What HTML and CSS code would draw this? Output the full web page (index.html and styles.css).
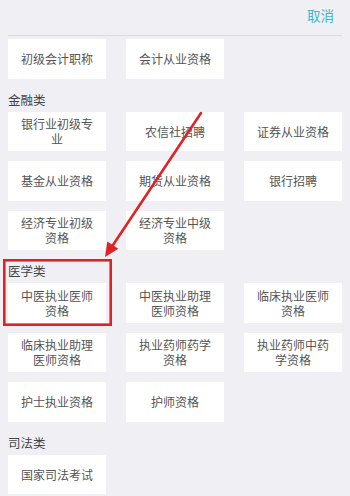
FILE: index.html
```html
<!DOCTYPE html>
<html lang="zh">
<head>
<meta charset="utf-8">
<link rel="stylesheet" href="styles.css">
</head>
<body>
<div class="page">
  <div class="header"><span class="cancel">取消</span></div>
  <div class="grid first">
    <div class="tile">初级会计职称</div>
    <div class="tile">会计从业资格</div>
  </div>
  <div class="label">金融类</div>
  <div class="grid">
    <div class="tile">银行业初级专业</div>
    <div class="tile">农信社招聘</div>
    <div class="tile">证券从业资格</div>
    <div class="tile">基金从业资格</div>
    <div class="tile">期货从业资格</div>
    <div class="tile">银行招聘</div>
    <div class="tile">经济专业初级资格</div>
    <div class="tile">经济专业中级资格</div>
  </div>
  <div class="label">医学类</div>
  <div class="grid">
    <div class="tile">中医执业医师资格</div>
    <div class="tile">中医执业助理医师资格</div>
    <div class="tile">临床执业医师资格</div>
    <div class="tile">临床执业助理医师资格</div>
    <div class="tile">执业药师药学资格</div>
    <div class="tile">执业药师中药学资格</div>
    <div class="tile">护士执业资格</div>
    <div class="tile">护师资格</div>
  </div>
  <div class="label">司法类</div>
  <div class="grid">
    <div class="tile">国家司法考试</div>
  </div>
  <svg class="overlay" width="350" height="496" viewBox="0 0 350 496">
    <line x1="201" y1="113" x2="112.5" y2="245.8" stroke="#dd2323" stroke-width="2.6" stroke-linecap="round"/>
    <polygon points="105,257 118.3,248.8 107.3,241.6" fill="#dd2323"/>
    <rect x="4.3" y="260.3" width="106.4" height="64.4" fill="none" stroke="#dd2323" stroke-width="2.6"/>
  </svg>
</div>
</body>
</html>
```
FILE: styles.css
```css
html, body {
  margin: 0;
  padding: 0;
  background: #efeff4;
}
body {
  font-family: "Noto Sans CJK SC", "Noto Sans", sans-serif;
  width: 350px;
  height: 496px;
  overflow: hidden;
}
.page {
  position: relative;
  padding: 0 8px;
}
.header {
  height: 35px;
  border-bottom: 1px solid #d9d9de;
  display: flex;
  justify-content: flex-end;
  align-items: flex-start;
}
.cancel {
  color: #45b6c8;
  font-size: 13.5px;
  line-height: 16px;
  margin-top: 7px;
  margin-right: 8px;
}
.grid {
  display: grid;
  grid-template-columns: repeat(3, 1fr);
  column-gap: 20px;
  row-gap: 10px;
}
.grid.first {
  margin-top: 3px;
}
.tile {
  background: #fff;
  height: 39.5px;
  display: flex;
  align-items: center;
  justify-content: center;
  text-align: center;
  padding: 0 11px;
  box-sizing: border-box;
  color: #555;
  font-size: 12px;
  line-height: 15px;
}
.label {
  color: #444;
  font-size: 12.5px;
  line-height: 16px;
  padding-top: 13px;
  padding-bottom: 4px;
}
.overlay {
  position: absolute;
  left: 0;
  top: 0;
  pointer-events: none;
}
```
